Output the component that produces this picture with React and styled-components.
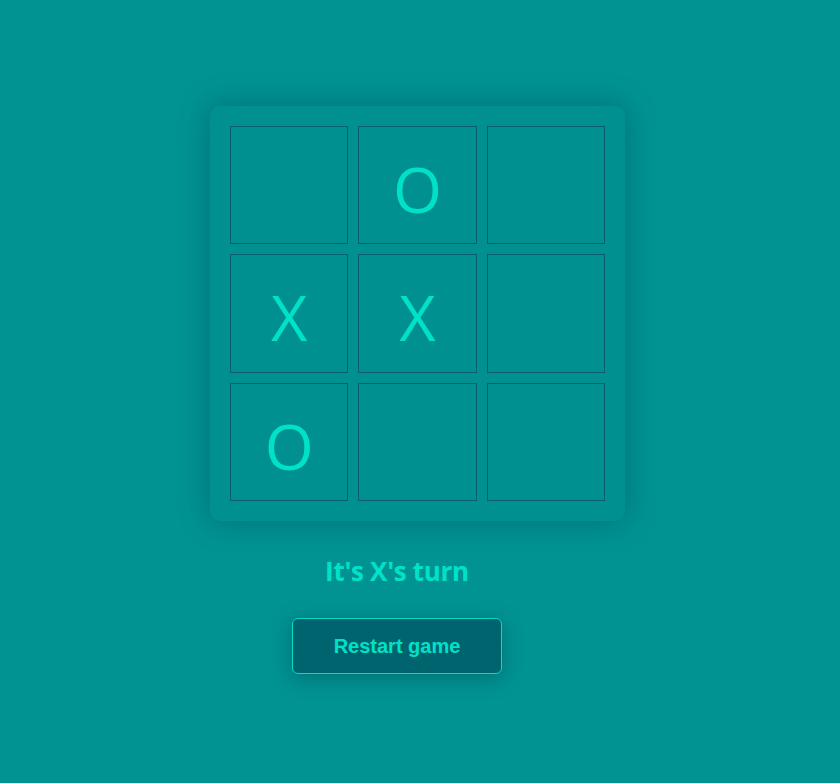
import React, { useState } from "react";
import styled, { createGlobalStyle } from "styled-components";

const Global = createGlobalStyle`
  html, body { margin: 0; padding: 0; background: #009392; }
  body { font-family: "Open Sans", "Noto Sans", sans-serif; }
`;

const Page = styled.div`
  width: 840px;
  height: 783px;
  background: #009392;
  display: flex;
  flex-direction: column;
  align-items: center;
  padding-top: 106px;
  box-sizing: border-box;
  padding-right: 46px;
`;

const Board = styled.div`
  box-sizing: border-box;
  width: 415px;
  height: 415px;
  display: grid;
  grid-template-columns: repeat(3, 1fr);
  grid-template-rows: repeat(3, 1fr);
  gap: 10px;
  padding: 20px;
  background: #00908f;
  border-radius: 10px;
  box-shadow: 0 0 30px rgba(0, 60, 70, 0.4);
  margin-left: 41px;
`;

const Cell = styled.button`
  box-sizing: border-box;
  width: 100%;
  height: 100%;
  border: 1px solid #0b5f6d;
  background: transparent;
  color: #00e2c8;
  font-family: "Open Sans", "Noto Sans", sans-serif;
  font-size: 63px;
  font-weight: 400;
  line-height: 1;
  padding: 7px 0 0 0;
  display: flex;
  align-items: center;
  justify-content: center;
  cursor: pointer;
`;

const Status = styled.div`
  margin-top: 35px;
  color: #00e2c8;
  font-family: "Open Sans", "Noto Sans", sans-serif;
  font-weight: 700;
  font-size: 26px;
  line-height: 1.2;
  letter-spacing: -0.3px;
`;

const Restart = styled.button`
  margin-top: 31px;
  width: 210px;
  height: 56px;
  box-sizing: border-box;
  background: #00646f;
  border: 1px solid #00dcc6;
  border-radius: 6px;
  color: #00e2c8;
  font-family: "Liberation Sans", Arial, sans-serif;
  font-weight: 700;
  font-size: 20px;
  box-shadow: 0 4px 20px rgba(0, 50, 60, 0.35);
  cursor: pointer;
`;

const initial = ["", "O", "", "X", "X", "", "O", "", ""];

export default function App() {
  const [cells] = useState(initial);
  return (
    <>
      <Global />
      <Page>
        <Board>
          {cells.map((c, i) => (
            <Cell key={i}>{c}</Cell>
          ))}
        </Board>
        <Status>It's X's turn</Status>
        <Restart>Restart game</Restart>
      </Page>
    </>
  );
}
